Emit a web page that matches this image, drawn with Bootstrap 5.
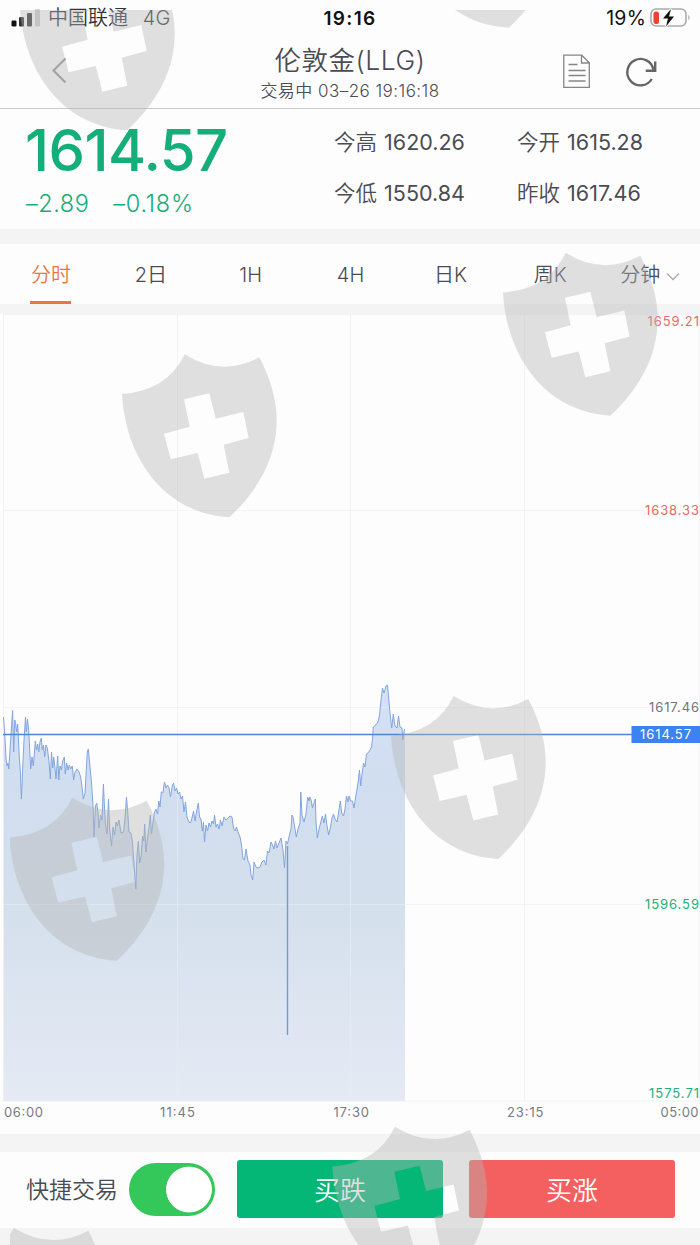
<!DOCTYPE html>
<html lang="zh-CN">

<head>
    <meta charset="UTF-8" />
    <meta name="viewport" content="width=device-width, initial-scale=1.0" />
    <title>伦敦金(LLG)</title>
    <link href="https://cdn.jsdelivr.net/npm/bootstrap@5.3.3/dist/css/bootstrap.min.css" rel="stylesheet" />
    <style>
        body {
            width: 700px;
            height: 1245px;
            overflow: hidden;
            background: #f4f4f4;
            color: #4a4c52;
            font-family: Inter, "Noto Sans CJK SC", sans-serif;
            font-weight: 350;
        }

        .panel {
            background: #fdfdfd;
        }

        .status-bar {
            height: 36px;
            font-size: 19.5px;
            line-height: 37px;
            color: #111;
        }

        .signal {
            margin-left: 11px;
        }

        .status-bar .carrier {
            color: #333;
            font-size: 20px;
            margin-left: 8px;
        }

        .status-bar .carrier span {
            margin-left: 9px;
            letter-spacing: .3px;
        }

        .status-bar .clock {
            font-size: 19px;
            font-weight: 600;
            letter-spacing: 1.3px;
        }

        .status-bar .level {
            font-weight: 400;
            letter-spacing: .2px;
        }

        .side {
            width: 250px;
        }

        .title-bar {
            height: 73px;
            border-bottom: 1px solid #c9c9c9;
        }

        .title-bar .name {
            font-size: 26.5px;
            line-height: 32px;
            margin-top: 8px;
            letter-spacing: .5px;
        }

        .title-bar .state {
            font-size: 17px;
            line-height: 20px;
            margin-top: 5px;
            letter-spacing: .45px;
        }

        .quote {
            height: 120px;
        }

        .last-price {
            width: 334px;
            padding-left: 26px;
            color: #14ae78;
        }

        .last-price .price {
            font-size: 58px;
            font-weight: 500;
            line-height: 60px;
            margin: 11px 0 0 -1px;
            letter-spacing: -.6px;
        }

        .last-price .change {
            font-size: 23.5px;
            line-height: 30px;
            margin-top: 9px;
            letter-spacing: .5px;
        }

        .last-price .change span + span {
            letter-spacing: .75px;
        }

        .stats {
            font-size: 21.5px;
            line-height: 51px;
            padding-top: 8px;
        }

        .stats div {
            width: 183px;
        }

        .stats span {
            margin-left: 1px;
            font-weight: 400;
        }

        .periods {
            height: 60px;
            margin-top: 15px;
            padding-left: 1px;
            font-size: 20px;
        }

        .periods .nav-link {
            height: 60px;
            padding: 0;
            line-height: 62px;
            color: #4a4c52;
        }

        .periods .active {
            width: 41px;
            color: #e2793f;
            border-bottom: 3px solid #e2793f;
        }

        .chart {
            height: 820px;
            margin-top: 10px;
        }

        .trade-bar {
            height: 76px;
            margin-top: 18px;
            padding: 0 25px 2px 26px;
        }

        .trade-bar label {
            font-size: 23px;
            width: 103px;
            padding-top: 2px;
        }

        .trade-bar .form-check-input {
            width: 86px;
            height: 53px;
            margin: 0 22px 0 0;
            border: 0;
            border-radius: 27px;
        }

        .trade-bar .form-check-input:checked {
            background: radial-gradient(circle at 60px 26.5px, #fff 22.5px, #34c759 23.3px);
        }

        .trade-bar .btn {
            width: 206px;
            height: 58px;
            border: 0;
            border-radius: 3px;
            color: #fff;
            font-size: 26px;
            font-weight: 350;
            padding: 2px 0 0;
        }

        .btn-sell {
            background: #04b777;
        }

        .btn-buy {
            background: #f4605f;
        }

        .shields {
            left: 0;
            top: 0;
            pointer-events: none;
        }
    </style>
</head>

<body class="position-relative">
    <header class="panel">
        <div class="status-bar d-flex justify-content-between">
            <div class="side d-flex align-items-center">
                <svg class="signal" width="29" height="18">
                    <rect x="0.5" y="11.5" width="5" height="6" rx="1.3" fill="#111" />
                    <rect x="8" y="8" width="5" height="9.5" rx="1.3" fill="#333" />
                    <rect x="16" y="4" width="5" height="13.5" rx="1.3" fill="#333" />
                    <rect x="24" y="0" width="5" height="17.5" rx="1.3" fill="#cfcfcf" />
                </svg>
                <div class="carrier">中国联通 <span>4G</span></div>
            </div>
            <div class="clock">19:16</div>
            <div class="side d-flex align-items-center justify-content-end">
                <span class="level">19%</span>
                <svg width="50" height="22" class="ms-1">
                    <rect x="1" y="2" width="35" height="17" rx="5" fill="none" stroke="#aaa" stroke-width="1.6" />
                    <rect x="3.5" y="4.500" width="5.500" height="12.500" rx="2.5" fill="#ee4034" />
                    <path d="M21 2 13 11.500h5l-2 8L24 9.500h-5z" fill="#111" stroke="#fdfdfd" stroke-width="2" paint-order="stroke" />
                    <path d="M38.300 7.500q2.500 3 0 6z" fill="#aaa" />
                </svg>
            </div>
        </div>
        <div class="title-bar d-flex justify-content-between">
            <div class="side">
                <svg width="80" height="70" fill="none" stroke="#999" stroke-width="2.200">
                    <path d="M65.500 22.500 53.500 34.500 65.500 46.500" />
                </svg>
            </div>
            <div class="text-center text-nowrap">
                <div class="name">伦敦金(LLG)</div>
                <div class="state">交易中 03–26 19:16:18</div>
            </div>
            <div class="side">
                <svg width="250" height="70" fill="none" stroke="#858585" stroke-width="1.300">
                    <path d="M113.800 19.200h18l7.500 7.500v24.600h-25.500zM131.500 19.500v7.500h8M118.500 28.500h9M118.500 34.500h17M118.500 39.500h17M118.500 45h17" />
                    <path d="M203.500 33.800A13.200 13.200 0 1 0 201.800 43M205.200 25.500v9.200h-9.500" stroke="#666" stroke-width="2.400" />
                </svg>
            </div>
        </div>
    </header>

    <section class="panel quote d-flex">
        <div class="last-price flex-shrink-0">
            <div class="price">1614.57</div>
            <div class="change d-flex"><span>–2.89</span><span class="ms-4">–0.18%</span></div>
        </div>
        <div class="stats d-flex flex-wrap align-content-start flex-fill">
            <div>今高 <span>1620.26</span></div>
            <div>今开 <span>1615.28</span></div>
            <div>今低 <span>1550.84</span></div>
            <div>昨收 <span>1617.46</span></div>
        </div>
    </section>

    <ul class="panel periods nav row g-0 text-center">
        <li class="col"><a class="nav-link active mx-auto">分时</a></li>
        <li class="col"><a class="nav-link">2日</a></li>
        <li class="col"><a class="nav-link">1H</a></li>
        <li class="col"><a class="nav-link">4H</a></li>
        <li class="col"><a class="nav-link">日K</a></li>
        <li class="col"><a class="nav-link">周K</a></li>
        <li class="col"><a class="nav-link">分钟
                <svg width="14" height="9" fill="none" stroke="#aaa" stroke-width="1.300">
                    <path d="M1 1.500 7 7.500 13 1.500" />
                </svg></a></li>
    </ul>

    <section class="panel chart">
        <svg width="700" height="820" viewBox="0 314 700 820" class="d-block">
            <defs>
                <linearGradient id="fill" x1="0" y1="685" x2="0" y2="1101" gradientUnits="userSpaceOnUse">
                    <stop offset="0" stop-color="#d6e0f8" />
                    <stop offset=".2" stop-color="#d1def0" />
                    <stop offset=".5" stop-color="#d3dfec" />
                    <stop offset="1" stop-color="#e5eaf4" />
                </linearGradient>
            </defs>
            <path id="area" fill="url(#fill)" />
            <path d="M3.500 314V1101M177.500 314V1101M350.500 314V1101M524.500 314V1101M699.500 314V1101M3 314.500H700M3 510.500H645M3 707.500H648M3 904.500H644M3 1101H700"
                stroke="#e9edf1" stroke-opacity=".6" />
            <path id="line" fill="none" stroke="#82a5df" stroke-width="1" stroke-linejoin="round" />
            <path d="M287.500 846V1035" stroke="#6f9ae0" stroke-width="1.400" />
            <path d="M3 734.500H632" stroke="#4f85d3" stroke-width="1.500" />
            <rect x="631.500" y="726" width="68.500" height="17" fill="#3d82f2" />
            <g id="labels" font-size="13" font-weight="400"></g>
        </svg>
    </section>

    <footer class="panel trade-bar d-flex align-items-center">
        <label for="quick">快捷交易</label>
        <input id="quick" class="form-check-input" type="checkbox" role="switch" checked />
        <button class="btn btn-sell">买跌</button>
        <button class="btn btn-buy ms-auto">买涨</button>
    </footer>

    <svg id="shields" class="shields position-absolute" width="700" height="1245">
        <defs>
            <clipPath id="edge">
                <rect x="10" y="10" width="690" height="1235" />
            </clipPath>
            <path id="shield" fill-rule="evenodd" d="M0 40Q45 37 62.700 0.300Q99.500 23.500 137.300 3.300C146.500 21 154.500 42 154.700 66C154.700 109 131 141 107.300 163.300C38 159 3 99 0 40z
                M62 45.300 87.300 39.300 93.700 64.700 121.300 58 126.700 84 101.700 90.700 107.300 118.700 82.300 124.700 75.700 99 48.700 105.300 42 79.700 67.700 72.700z" />
        </defs>
        <g id="marks" clip-path="url(#edge)" fill="#b4b4b4" fill-opacity=".42"></g>
    </svg>

    <script src="https://cdn.jsdelivr.net/npm/bootstrap@5.3.3/dist/js/bootstrap.bundle.min.js"></script>
    <script>
        // x,y pairs of the minute line
        const points = `3.5,717 4.7,733 6,758 7,766 8,763 8.8,769 10,750 11,735 12.6,710.5 13.7,752 14.8,720 15.7,724 16.7,732 17.7,724
            18.6,742 19.3,758 20.3,770 21.4,799 22.6,770 24,740 25.5,717 26.3,732 27.5,719 28.7,730 29.7,750 30.7,769 32,757 33.3,766
            34.5,752 35.3,741 36.5,750 37.7,744 38.7,752 40,742 41.3,738 42.3,750 43.5,745 44.7,757 46,745 47.5,749 49,762 50.3,779
            51.5,752 52.7,768 53.7,757 54.7,765 56,779 57.7,756 58.8,780 60,766 61.3,770 62.5,762 64.3,757 65.3,774 66.7,763 68,770
            69.3,765 70.7,769 72.3,766 73.6,780 75,772 77,769 79,772 80.7,777 82,787 83.3,799 85,793 86,775 87.3,752 88.3,749
            90,767 91.5,783 93,805 94,837 95.5,806 96.7,803 98,812 99,828 100.6,815 102,820 103.4,784 104.5,808 105.5,824 107,834
            108.5,799 109.5,827 111.5,846 113,827 114.7,835 116,822 117.3,826 119,820 121,833 123.5,832 125,818 126.5,797 127.8,813
            129,832 131,833 132.5,843 134,864 135.8,889 137,855 138.4,841 139.6,863 141,857 142.5,836 143.8,841 144.7,824 146,852
            147.5,838 149,828 150.3,815 151.5,834 153,822 154.5,812 156,809 157.5,814 158.8,801 160,807 161.3,792 162.8,793 164.5,782
            166,788 167.5,785 169,788 170.5,797 172,787 173.5,783 175,791 176.5,788 178,794 179.5,792 181,799 182.5,796 184,812 185.5,802
            187,817 188.8,822 190.5,823 192,818 193.5,811 195,821 196.7,811 198.3,803 199.5,817 201,819 202.3,831 203.5,822 204.5,842
            206,825 207.5,831 209,823 210.5,827 212,821 213.5,824 214.5,815 216,827 217.5,824 219,829 220.5,820 222,826 224,817 226,820
            228,818 230,816 232,817 233.5,828 235,831 236.5,827 238,832 240,837 241.5,845 243,859 244.5,860 246,849 248,861 250,865
            251,875 252.7,880 254,862 256,867 258,868 260,867 262,862 264,860 266,865 267.5,851 269,853 271,842 272.5,845 274,849
            275.5,841 277,848 279,843 281,838 283,850 284.5,868 286,841 287.5,844 289,837 291,829 292,815 293,817 294.5,826 296.3,837
            298,829 300,823 300.8,792 302,815 304,822 306,814 307.7,797 309,801 310,797 311.3,801 312.5,808 314,803 315.3,799 316,822
            317.3,838 319,829 320.6,823 322.3,816 324,823 325.5,814 327,826 328.7,835 330.5,827 332,818 333.5,814 335,819 337,822
            338.5,813 340.3,801 341.7,813 343.5,816 345,809 346.5,796 348,802 349,796 350.7,801 352.5,801 354,808 356,795 358,783
            359.5,770 360.7,786 362,774 363.5,763 365,767 366.5,754 368,753 370,750 371.5,747 372.5,739 373.3,727 374.7,726 376.3,724
            378,722 379.5,715 381,700 382.5,688 384,693 386,686 387.5,685 389,702 390.5,718 391.7,728 393.3,714 395,726 397,728
            398.5,716 400,727 402,728 402.8,740 404.5,729`.split(/\s+/);

        document.getElementById("line").setAttribute("d", "M" + points.join("L"));
        document.getElementById("area").setAttribute("d", "M3.5,1101L" + points.join("L") + "L405,729V1101z");

        // text, left edge, baseline, width, colour
        const labels = [
            ["1659.21", 647.5, 326, 51.5, "#e4696b"],
            ["1638.33", 645, 515, 54, "#e4696b"],
            ["1617.46", 649, 712, 50, "#70727f"],
            ["1614.57", 640, 739, 51, "#fff"],
            ["1596.59", 645, 909, 54, "#25ae7b"],
            ["1575.71", 649, 1098, 50, "#25ae7b"],
            ["06:00", 4, 1117, 39, "#777985"],
            ["11:45", 160, 1117, 35, "#777985"],
            ["17:30", 333.5, 1117, 35.5, "#777985"],
            ["23:15", 507, 1117, 36.5, "#777985"],
            ["05:00", 660.5, 1117, 38, "#777985"],
        ];
        document.getElementById("labels").innerHTML = labels.map(([text, x, y, w, color]) =>
            `<text x="${x}" y="${y}" textLength="${w}" fill="${color}">${text}</text>`).join("");

        const spots = [[20, -33], [401.5, -135.5], [503, 252.5], [122, 354], [391, 695.7], [9.5, 797.5], [332.3, 1126.4], [-49, 1227.4]];
        document.getElementById("marks").innerHTML = spots.map(([x, y]) =>
            `<use href="#shield" x="${x}" y="${y}" />`).join("");
    </script>
</body>

</html>
